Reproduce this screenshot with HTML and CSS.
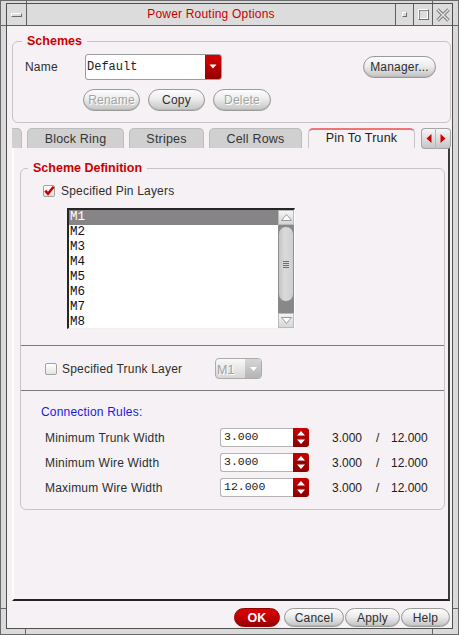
FILE: index.html
```html
<!DOCTYPE html>
<html>
<head>
<meta charset="utf-8">
<title>Power Routing Options</title>
<link rel="stylesheet" href="styles.css">
</head>
<body>
<div class="frame">
  <div class="win">
    <div class="titlebar">
      <div class="tbtn menu"><span class="dash"></span></div>
      <div class="title">Power Routing Options</div>
      <div class="tbtn min"><span class="dot"></span></div>
      <div class="tbtn max"><span class="sq"></span></div>
      <div class="tbtn close">
        <svg width="14" height="14" viewBox="0 0 14 14">
          <path d="M1.5 1.5 L12.5 12.5 M12.5 1.5 L1.5 12.5" stroke="#7c7c7c" stroke-width="3.4" fill="none"/>
          <path d="M1.5 1.5 L12.5 12.5 M12.5 1.5 L1.5 12.5" stroke="#e6e6e6" stroke-width="1.4" fill="none"/>
        </svg>
      </div>
    </div>

    <div class="content">
      <fieldset class="group schemes">
        <legend>Schemes</legend>
        <div class="name-row">
          <span class="name-lbl">Name</span>
          <div class="combo">
            <span class="combo-text">Default</span>
            <span class="combo-btn">
              <svg width="8" height="5" viewBox="0 0 8 5"><path d="M0.5 0.5 L7.5 0.5 L4 4.5 Z" fill="#fff"/></svg>
            </span>
          </div>
          <button class="btn manager">Manager...</button>
        </div>
        <div class="btn-row">
          <button class="btn disabled w-rename">Rename</button>
          <button class="btn w-copy">Copy</button>
          <button class="btn disabled w-delete">Delete</button>
        </div>
      </fieldset>

      <div class="tabs">
        <div class="tab partial"></div>
        <div class="tab t-block">Block Ring</div>
        <div class="tab t-stripes">Stripes</div>
        <div class="tab t-cell">Cell Rows</div>
        <div class="tab active t-pin">Pin To Trunk</div>
        <div class="tab-arrows">
          <span class="arr"><svg width="6" height="9" viewBox="0 0 6 9"><path d="M5.5 0 L5.5 9 L0.5 4.5 Z" fill="#d00000"/></svg></span>
          <span class="arr"><svg width="6" height="9" viewBox="0 0 6 9"><path d="M0.5 0 L0.5 9 L5.5 4.5 Z" fill="#d00000"/></svg></span>
        </div>
      </div>

      <div class="panel">
        <fieldset class="group def">
          <legend>Scheme Definition</legend>
          <div class="sec sec1">
            <div class="check-row">
              <span class="cb">
                <svg width="12" height="12" viewBox="0 0 12 12"><path d="M2.3 5.6 L5 8.8 L10.6 1.8" stroke="#cc0000" stroke-width="2.6" fill="none"/></svg>
              </span>
              <span>Specified Pin Layers</span>
            </div>
            <div class="list">
              <div class="items">
                <div class="item sel">M1</div>
                <div class="item">M2</div>
                <div class="item">M3</div>
                <div class="item">M4</div>
                <div class="item">M5</div>
                <div class="item">M6</div>
                <div class="item">M7</div>
                <div class="item">M8</div>
              </div>
              <div class="scroll">
                <span class="sbtn">
                  <svg width="11" height="7" viewBox="0 0 11 7"><path d="M0.5 6.5 L5.5 0.5 L10.5 6.5 Z" fill="#fff" stroke="#9a9a9a"/></svg>
                </span>
                <span class="thumb">
                  <span class="grip"></span>
                </span>
                <span class="trough"></span>
                <span class="sbtn">
                  <svg width="11" height="7" viewBox="0 0 11 7"><path d="M0.5 0.5 L10.5 0.5 L5.5 6.5 Z" fill="#fff" stroke="#9a9a9a"/></svg>
                </span>
              </div>
            </div>
          </div>

          <div class="sec sec2">
            <div class="check-row trunk">
              <span class="cb"></span>
              <span>Specified Trunk Layer</span>
            </div>
            <div class="dcombo">
              <span class="dcombo-text">M1</span>
              <span class="dcombo-btn">
                <svg width="7" height="4" viewBox="0 0 7 4"><path d="M0 0 L7 0 L3.5 4 Z" fill="#fff"/></svg>
              </span>
            </div>
          </div>

          <div class="sec sec3">
            <div class="rules-title">Connection Rules:</div>
            <div class="rules">
              <div class="rule">
                <span class="rule-lbl">Minimum Trunk Width</span>
                <div class="spin">
                  <span class="spin-field">3.000</span>
                  <span class="spin-btn">
                    <svg width="16" height="19" viewBox="0 0 16 19"><path d="M4 7.5 L12 7.5 L8 3 Z M4 11.5 L12 11.5 L8 16 Z" fill="#fff"/><path d="M3 9.5 L13 9.5" stroke="#7a0000" stroke-width="1"/></svg>
                  </span>
                </div>
                <span class="lo">3.000</span><span class="slash">/</span><span class="hi">12.000</span>
              </div>
              <div class="rule">
                <span class="rule-lbl">Minimum Wire Width</span>
                <div class="spin">
                  <span class="spin-field">3.000</span>
                  <span class="spin-btn">
                    <svg width="16" height="19" viewBox="0 0 16 19"><path d="M4 7.5 L12 7.5 L8 3 Z M4 11.5 L12 11.5 L8 16 Z" fill="#fff"/><path d="M3 9.5 L13 9.5" stroke="#7a0000" stroke-width="1"/></svg>
                  </span>
                </div>
                <span class="lo">3.000</span><span class="slash">/</span><span class="hi">12.000</span>
              </div>
              <div class="rule">
                <span class="rule-lbl">Maximum Wire Width</span>
                <div class="spin">
                  <span class="spin-field">12.000</span>
                  <span class="spin-btn">
                    <svg width="16" height="19" viewBox="0 0 16 19"><path d="M4 7.5 L12 7.5 L8 3 Z M4 11.5 L12 11.5 L8 16 Z" fill="#fff"/><path d="M3 9.5 L13 9.5" stroke="#7a0000" stroke-width="1"/></svg>
                  </span>
                </div>
                <span class="lo">3.000</span><span class="slash">/</span><span class="hi">12.000</span>
              </div>
            </div>
          </div>
        </fieldset>
      </div>

      <div class="actions">
        <button class="btn ok">OK</button>
        <button class="btn cancel">Cancel</button>
        <button class="btn apply">Apply</button>
        <button class="btn help">Help</button>
      </div>
    </div>
  </div>
</div>
</body>
</html>
```

FILE: styles.css
```css
* { box-sizing: border-box; }
html, body { margin: 0; padding: 0; }
body {
  width: 459px;
  height: 635px;
  overflow: hidden;
  font-family: "Liberation Sans", Arial, sans-serif;
  font-size: 12px;
  letter-spacing: 0.2px;
  color: #2e2e2e;
  background: #d9d9d9;
}

/* window frame */
.frame {
  width: 459px;
  height: 635px;
  border: 1px solid #6a6a6a;
  padding: 2px 5px 5px 5px;
  display: flex;
  background-color: #dadada;
  background-origin: border-box;
  background-repeat: no-repeat;
  background-image:
    linear-gradient(#666, #666), linear-gradient(#666, #666),
    linear-gradient(#666, #666), linear-gradient(#666, #666),
    linear-gradient(#666, #666), linear-gradient(#666, #666),
    linear-gradient(#666, #666), linear-gradient(#666, #666);
  background-size:
    1px 3px, 1px 3px, 1px 6px, 1px 6px,
    6px 1px, 6px 1px, 6px 1px, 6px 1px;
  background-position:
    26px 0, 432px 0, 25px 629px, 432px 629px,
    0 25px, 0 608px, 453px 25px, 453px 608px;
}
.win {
  flex: 1;
  border: 1px solid #505050;
  display: flex;
  flex-direction: column;
  background: #f5f1f4;
}

/* title bar */
.titlebar {
  height: 22px;
  flex: none;
  display: flex;
  background: #dcdcdc;
  border-bottom: 1px solid #5e5e5e;
}
.tbtn {
  display: flex;
  align-items: center;
  justify-content: center;
}
.menu { width: 20px; border-right: 1px solid #5e5e5e; }
.dash {
  width: 11px; height: 4px;
  border-top: 1px solid #fff; border-left: 1px solid #fff;
  border-bottom: 1px solid #6a6a6a; border-right: 1px solid #6a6a6a;
}
.title {
  flex: 1;
  text-align: center;
  line-height: 21px;
  color: #c80000;
  font-size: 12px;
}
.min { width: 18px; border-left: 1px solid #5e5e5e; }
.dot {
  width: 5px; height: 5px;
  border-top: 1px solid #fff; border-left: 1px solid #fff;
  border-bottom: 1px solid #6a6a6a; border-right: 1px solid #6a6a6a;
}
.max { width: 19px; border-left: 1px solid #5e5e5e; }
.sq {
  width: 11px; height: 11px;
  border-top: 1px solid #fff; border-left: 1px solid #fff;
  border-bottom: 1px solid #707070; border-right: 1px solid #707070;
  box-shadow: inset 1px 1px 0 #8a8a8a, inset -1px -1px 0 #fff;
}
.close { width: 20px; border-left: 1px solid #5e5e5e; }
.close svg { display: block; }

/* content */
.content {
  flex: 1;
  display: flex;
  flex-direction: column;
}

.group {
  margin: 0;
  padding: 0;
  min-width: 0;
  border: 1px solid #c7c3c7;
  border-radius: 6px;
}
.group legend {
  padding: 0 5px;
  font-weight: bold;
  font-size: 12.5px;
  line-height: 14px;
  letter-spacing: 0;
  color: #cc0000;
}

.schemes {
  margin: 8px 1px 0 5px;
  padding: 0 14px 11px 9px;
}
.name-row {
  margin-top: 6px;
  height: 26px;
  display: flex;
  align-items: center;
  padding-left: 3px;
}
.name-lbl { width: 60px; }
.combo {
  width: 137px;
  height: 26px;
  display: flex;
  border: 1px solid #9c9c9c;
  border-radius: 3px;
  background: #fff;
  overflow: hidden;
}
.combo-text {
  flex: 1;
  font-family: "Liberation Mono", "DejaVu Sans Mono", monospace;
  font-size: 12px;
  letter-spacing: 0;
  line-height: 24px;
  padding-left: 1px;
  color: #222;
}
.combo-btn {
  width: 16px;
  display: flex;
  align-items: center;
  justify-content: center;
  background: linear-gradient(#d80000, #b00000 60%, #900000);
}
.combo-btn svg { display: block; margin-top: -1px; }

.btn {
  font: inherit;
  font-size: 12px;
  letter-spacing: 0.2px;
  color: #2e2e2e;
  padding: 0;
  height: 22px;
  border: 1px solid #9a9a9a;
  border-radius: 11px;
  background: linear-gradient(#fdfdfd, #ececec 45%, #d2d2d2 80%, #c4c4c4);
  box-shadow: inset 0 -1px 0 #b8b8b8;
}
.btn.disabled {
  color: #a3a3a3;
  text-shadow: 1px 1px 0 #fff;
}
.manager { margin-left: auto; width: 73px; }
.btn-row {
  margin-top: 9px;
  display: flex;
  gap: 8px;
  padding-left: 61px;
}
.w-rename { width: 57px; }
.w-copy { width: 57px; }
.w-delete { width: 58px; }

/* tabs */
.tabs {
  margin: 5px 0 0 5px;
  height: 20px;
  display: flex;
  align-items: flex-end;
  position: relative;
  z-index: 1;
}
.tab {
  height: 20px;
  margin-right: 5px;
  background: #d0d0d0;
  border: 1px solid #bcbcbc;
  border-bottom: none;
  border-radius: 5px 5px 0 0;
  text-align: center;
  line-height: 20px;
  font-size: 12.5px;
  color: #353535;
}
.partial {
  width: 10px;
  border-left: none;
  border-radius: 0 5px 0 0;
}
.t-block { width: 97px; }
.t-stripes { width: 75px; }
.t-cell { width: 93px; margin-right: 6px; }
.t-pin {
  width: 107px;
  margin-right: 6px;
}
.tab.active {
  background: #f5f1f4;
  border-color: #c8c4c8;
  border-top: 2px solid #ef7474;
  line-height: 16px;
  color: #222;
}
.tab-arrows {
  align-self: flex-start;
  display: flex;
  height: 21px;
}
.arr {
  width: 15px;
  height: 21px;
  display: flex;
  align-items: center;
  justify-content: center;
  border: 1px solid #a4a4a4;
  background: linear-gradient(#f6f6f6, #dedede 50%, #c6c6c6);
}
.arr:first-child { border-radius: 4px 0 0 4px; border-right-color: #b8b8b8; }
.arr:last-child { border-radius: 0 4px 4px 0; border-left: none; }

/* panel */
.panel {
  height: 453px;
  flex: none;
  margin: 0 2px 0 5px;
  border-left: 2px solid #fdfcfd;
  border-right: 2px solid #3c3c3c;
  border-bottom: 2px solid #222;
  padding-top: 13px;
}
.def {
  margin: 0 3px 0 6px;
}
.def legend { margin-left: 7px; }

.sec1 { padding: 9px 0 16px 22px; border-bottom: 1px solid #7c7c7c; }
.check-row {
  display: flex;
  align-items: center;
  height: 14px;
  gap: 6px;
}
.cb {
  width: 12px;
  height: 12px;
  border: 1px solid #a2a2a2;
  border-radius: 2px;
  background: linear-gradient(#ffffff, #e4e4e4);
  display: flex;
  align-items: center;
  justify-content: center;
  overflow: visible;
}
.cb svg { display: block; flex: none; }

.list {
  margin: 10px 0 0 24px;
  width: 228px;
  height: 121px;
  display: flex;
  border-top: 2px solid #262626;
  border-left: 2px solid #262626;
  border-right: 1px solid #ffffff;
  border-bottom: 1px solid #f0f0f0;
  background: #fff;
}
.items {
  flex: 1;
  overflow: hidden;
}
.item {
  height: 15px;
  line-height: 15px;
  padding-left: 1px;
  font-family: "Liberation Mono", "Courier New", monospace;
  font-size: 12.5px;
  letter-spacing: 0;
  color: #111;
}
.item.sel { background: #878487; color: #fff; }

.scroll {
  width: 16px;
  display: flex;
  flex-direction: column;
  background: #8a878a;
}
.sbtn {
  height: 15px;
  flex: none;
  display: flex;
  align-items: center;
  justify-content: center;
  border: 1px solid #b9b9b9;
  background: linear-gradient(#f4f4f4, #d6d6d6);
}
.thumb {
  margin-top: 1px;
  height: 76px;
  flex: none;
  border: 1px solid #8f8f8f;
  border-radius: 8px;
  background: linear-gradient(90deg, #c4c4c4, #dadada 40%, #cfcfcf);
  display: flex;
  align-items: center;
  justify-content: center;
}
.grip {
  width: 6px;
  height: 7px;
  background: repeating-linear-gradient(#6e6e6e 0 1px, transparent 1px 2px);
}
.trough { flex: 1; }

.sec2 {
  padding: 12px 0 11px 24px;
  display: flex;
  align-items: center;
  border-bottom: 1px solid #7c7c7c;
}
.trunk { width: 170px; gap: 5px; }
.dcombo {
  width: 47px;
  height: 21px;
  display: flex;
  border: 1px solid #ababab;
  border-radius: 4px;
  overflow: hidden;
  background: linear-gradient(#f9f9f9, #e4e4e4 60%, #d6d6d6);
}
.dcombo-text {
  flex: 1;
  color: #a0a0a0;
  text-shadow: 1px 1px 0 #fff;
  line-height: 22px;
  padding-left: 1px;
  font-size: 12.5px;
  letter-spacing: 0;
}
.dcombo-btn {
  width: 16px;
  display: flex;
  align-items: center;
  justify-content: center;
  background: linear-gradient(#d6d6d6, #c2c2c2 60%, #b4b4b4);
}

.sec3 { padding: 14px 0 12px 20px; }
.rules-title {
  line-height: 14px;
  color: #1a1ae6;
  font-size: 12px;
}
.rules {
  margin-top: 9px;
  display: flex;
  flex-direction: column;
  gap: 6px;
}
.rule {
  display: flex;
  align-items: center;
  height: 19px;
  padding-left: 4px;
}
.rule-lbl { width: 175px; }
.spin {
  width: 89px;
  height: 19px;
  display: flex;
}
.spin-field {
  flex: 1;
  background: #fff;
  border: 1px solid #b4b4b4;
  border-right: none;
  border-radius: 3px 0 0 3px;
  font-family: "Liberation Mono", "DejaVu Sans Mono", monospace;
  font-size: 11.5px;
  letter-spacing: 0;
  line-height: 16px;
  padding-left: 3px;
  color: #222;
}
.spin-btn {
  width: 16px;
  border-radius: 0 3px 3px 0;
  background: linear-gradient(#c80000, #a20000 60%, #8a0000);
  overflow: hidden;
}
.spin-btn svg { display: block; }
.lo { margin-left: 23px; width: 44px; color: #1c1c1c; letter-spacing: 0; }
.slash { width: 15px; color: #1c1c1c; }
.hi { color: #1c1c1c; letter-spacing: 0; }

/* bottom buttons */
.actions {
  flex: 1;
  display: flex;
  justify-content: flex-end;
  align-items: flex-start;
  padding: 7px 2px 0 0;
}
.actions .btn { height: 19px; border-radius: 10px; }
.ok {
  width: 46px;
  margin-right: 4px;
  color: #fff;
  font-weight: bold;
  font-size: 12.5px;
  border-color: #8c0000;
  background: linear-gradient(#e00000, #c00000 50%, #9a0000);
  box-shadow: none;
}
.cancel { width: 60px; margin-right: 1px; }
.apply { width: 55px; margin-right: 1px; }
.help { width: 49px; }
```
